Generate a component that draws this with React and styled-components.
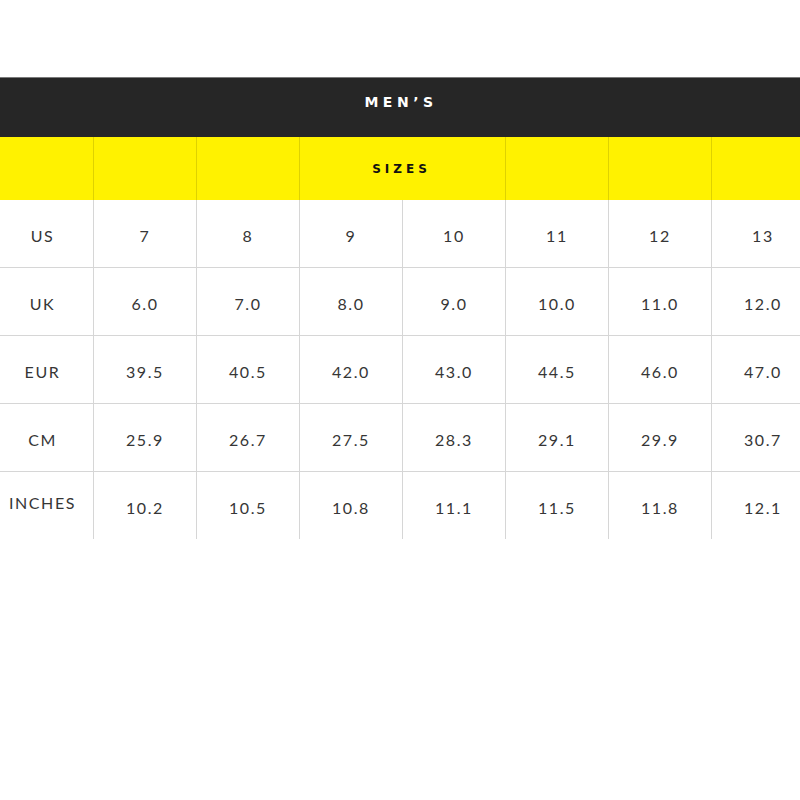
import React from "react";
import styled, { createGlobalStyle } from "styled-components";

const GlobalStyle = createGlobalStyle`
	html, body {
		margin: 0;
		padding: 0;
		background: #ffffff;
		overflow: hidden;
	}
`;

const Page = styled.div`
	width: 800px;
	height: 800px;
	padding-top: 77px;
	box-sizing: border-box;
	overflow: hidden;
	font-family: Lato, "Liberation Sans", sans-serif;
`;

const Banner = styled.div`
	height: 60px;
	background: #262626;
	border-top: 1px solid #7a7a7a;
	box-sizing: border-box;
	display: flex;
	align-items: center;
	justify-content: center;
	color: #ffffff;
	font-family: "DejaVu Sans", Lato, sans-serif;
	font-weight: 700;
	font-size: 14px;
	letter-spacing: 4.5px;
	padding-left: 2px;
	padding-bottom: 12px;
`;

const Grid = styled.div`
	display: grid;
	grid-template-columns: 93px repeat(7, 103px);
	width: 814px;
`;

const SizeCell = styled.div`
	height: 63px;
	background: #fff200;
	grid-column: ${(p) => p.$span || "auto"};
	border-left: ${(p) => (p.$first ? "none" : "1px solid rgba(0, 0, 0, 0.13)")};
	display: flex;
	align-items: center;
	justify-content: center;
	color: #111111;
	font-family: "DejaVu Sans", Lato, sans-serif;
	font-weight: 700;
	font-size: 12px;
	letter-spacing: 4px;
	padding-right: 2px;
	box-sizing: border-box;
`;

const Cell = styled.div`
	height: ${(p) => (p.$last ? "67px" : "68px")};
	border-left: ${(p) => (p.$first ? "none" : "1px solid #d6d6d6")};
	border-bottom: ${(p) => (p.$last ? "none" : "1px solid #d6d6d6")};
	box-sizing: border-box;
	display: flex;
	align-items: center;
	justify-content: center;
	padding-right: ${(p) => (p.$first ? "8px" : "0")};
	padding-top: ${(p) => (p.$raise ? "0" : "3px")};
	padding-bottom: ${(p) => (p.$raise ? "7px" : "0")};
	color: #363636;
	font-size: 16px;
	letter-spacing: 1.6px;
	font-weight: 400;
`;

const rows = [
	["US", "7", "8", "9", "10", "11", "12", "13"],
	["UK", "6.0", "7.0", "8.0", "9.0", "10.0", "11.0", "12.0"],
	["EUR", "39.5", "40.5", "42.0", "43.0", "44.5", "46.0", "47.0"],
	["CM", "25.9", "26.7", "27.5", "28.3", "29.1", "29.9", "30.7"],
	["INCHES", "10.2", "10.5", "10.8", "11.1", "11.5", "11.8", "12.1"],
];

const App = () => (
	<Page>
		<GlobalStyle />
		<Banner>MEN’S</Banner>
		<Grid>
			<SizeCell $first />
			<SizeCell />
			<SizeCell />
			<SizeCell $span="span 2">SIZES</SizeCell>
			<SizeCell />
			<SizeCell />
			<SizeCell />
			{rows.map((row, r) =>
				row.map((value, c) => (
					<Cell
						key={`${r}-${c}`}
						$first={c === 0}
						$last={r === rows.length - 1}
						$raise={r === rows.length - 1 && c === 0}
					>
						{value}
					</Cell>
				))
			)}
		</Grid>
	</Page>
);

export default App;
